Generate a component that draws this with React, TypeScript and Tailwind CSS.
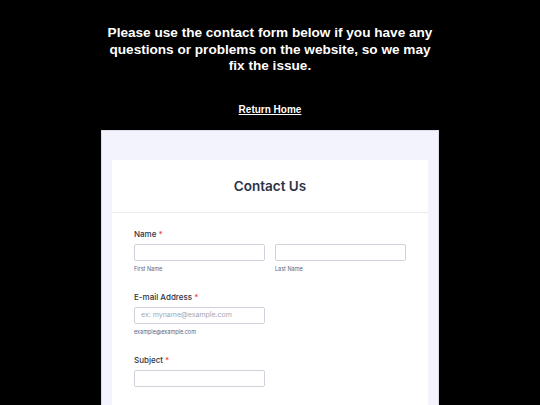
import React from 'react';

const INTER = "font-['Inter','Noto_Sans',sans-serif]";

function Req() {
  return <span className="text-[#f23a3c]"> *</span>;
}

function Label({ children }: { children: React.ReactNode }) {
  return (
    <p className={`${INTER} text-[8px] font-medium leading-[10px] text-[#2c3345]`}>
      {children}
      <Req />
    </p>
  );
}

function Input({ placeholder, className = '' }: { placeholder?: string; className?: string }) {
  return (
    <div
      className={`${INTER} flex h-[17px] items-center rounded-[2px] border border-[#cfd2da] bg-white px-[6px] text-[7px] text-[#a2a7b4] ${className}`}
    >
      {placeholder}
    </div>
  );
}

function Sub({ children }: { children: React.ReactNode }) {
  return <p className={`${INTER} mt-[4px] text-[5.5px] leading-[8px] text-[#57647e]`}>{children}</p>;
}

export default function App() {
  return (
    <div className="h-[405px] overflow-hidden bg-black">
      <div className="mx-auto w-[332px] pt-[25px] text-center font-['Liberation_Sans',Arial,sans-serif] text-white">
        <p className="text-[13.6px] font-bold leading-[16.5px]">
          Please use the contact form below if you have any questions or problems on the website, so we may fix
          the issue.
        </p>
        <p className="mt-[28px] text-[10px] font-bold leading-[14px] underline">Return Home</p>
      </div>

      <div className="mx-auto mt-[13px] w-[338px] border border-[#dcdcea] bg-[#f3f3fe] px-[10px] pt-[29px]">
        <div className="bg-white">
          <div className="flex h-[53px] items-center justify-center border-b border-[#eaebf2] pt-[2px]">
            <h1 className={`${INTER} text-[13.5px] font-semibold text-[#2c3345]`}>Contact Us</h1>
          </div>
          <div className="px-[22px] pb-10 pt-[16px]">
            <Label>Name</Label>
            <div className="mt-[5px] flex gap-[10px]">
              <div className="w-[132px]">
                <Input />
                <Sub>First Name</Sub>
              </div>
              <div className="w-[132px]">
                <Input />
                <Sub>Last Name</Sub>
              </div>
            </div>

            <div className="mt-[19px]">
              <Label>E-mail Address</Label>
              <div className="mt-[5px] w-[131px]">
                <Input placeholder="ex: myname@example.com" className="h-[16px]" />
                <Sub>example@example.com</Sub>
              </div>
            </div>

            <div className="mt-[19px]">
              <Label>Subject</Label>
              <div className="mt-[5px] w-[131px]">
                <Input />
              </div>
            </div>
          </div>
        </div>
      </div>
    </div>
  );
}
